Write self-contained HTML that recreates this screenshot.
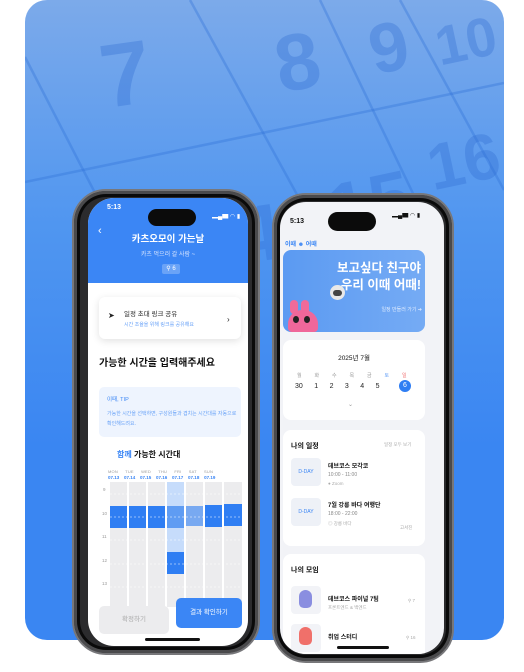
<!DOCTYPE html>
<html><head><meta charset="utf-8">
<style>
*{margin:0;padding:0;box-sizing:border-box}
body{width:524px;height:672px;background:#fff;position:relative;overflow:hidden;font-family:"Liberation Sans","Noto Sans CJK KR",sans-serif}
.abs{position:absolute}
.card{left:25px;top:0;width:479px;height:640px;border-radius:22px;background:linear-gradient(180deg,#7caaea 0%,#5096f0 35%,#3a86f2 70%,#3a86f2 100%);overflow:hidden}
.phone{position:absolute;background:#2b2b2d;border:2px solid #77777a;box-shadow:inset 0 0 0 3px #4a4a4c,inset 0 0 0 6px #0a0a0a}
.screen{position:absolute;overflow:hidden}
.t{position:absolute;white-space:nowrap}
.isl{position:absolute;background:#0b0b0b;border-radius:10px}
</style></head><body>
<div class="abs card">
<svg width="479" height="640" style="position:absolute;left:0;top:0">
<g stroke="#2f6fd6" stroke-opacity=".35" stroke-width="2.5" fill="none">
<line x1="0" y1="182" x2="479" y2="83"/>
<line x1="0" y1="57" x2="120" y2="290"/>
<line x1="165" y1="0" x2="330" y2="300"/>
<line x1="295" y1="0" x2="420" y2="260"/>
<line x1="375" y1="0" x2="479" y2="190"/>
</g>
<g fill="#2d6ad0" fill-opacity=".33" font-family="Liberation Sans" font-weight="bold">
<text x="75" y="105" font-size="90" transform="rotate(-8 100 70)">7</text>
<text x="250" y="88" font-size="80" transform="rotate(-10 280 60)">8</text>
<text x="345" y="70" font-size="70" transform="rotate(-12 370 50)">9</text>
<text x="410" y="62" font-size="55" transform="rotate(-12 430 40)">10</text>
<text x="300" y="230" font-size="75" transform="rotate(-12 340 190)">15</text>
<text x="400" y="185" font-size="65" transform="rotate(-12 430 150)">16</text>
<text x="210" y="260" font-size="80" transform="rotate(-8 240 220)">4</text>
</g>
</svg>
</div>

<!-- LEFT PHONE -->
<div class="phone" style="left:72px;top:189px;width:188px;height:466px;border-radius:34px"></div>
<div class="screen" style="left:88px;top:198px;width:160px;height:448px;border-radius:26px;background:#fff">
  <div class="abs" style="left:0;top:0;width:160px;height:85px;background:#3b86f5"></div>
  <div class="t" style="left:19px;top:6px;font-size:7px;color:#fff;font-weight:bold">5:13</div>
  <div class="isl" style="left:60px;top:11px;width:48px;height:17px"></div>
  <div class="t" style="left:124px;top:13px;font-size:6px;color:#fff">▂▄▆ ◠ ▮</div>
  <div class="t" style="left:10px;top:27px;font-size:11px;color:#fff">‹</div>
  <div class="t" style="left:0;width:160px;text-align:center;top:33px;font-size:9.5px;color:#fff;font-weight:bold">카츠오모이 가는날</div>
  <div class="t" style="left:0;width:160px;text-align:center;top:51px;font-size:6px;color:#dbe7ff">카츠 먹으러 갈 사람 ~</div>
  <div class="abs" style="left:74px;top:66px;width:18px;height:10px;background:#6aa3f7;border-radius:2px;color:#fff;font-size:6px;text-align:center;line-height:10px">⚲ 6</div>
  <div class="abs" style="left:11px;top:99px;width:142px;height:42px;background:#fff;border-radius:6px;box-shadow:0 2px 8px rgba(0,0,0,.12)"></div>
  <div class="t" style="left:20px;top:113px;font-size:8px;color:#222">➤</div>
  <div class="t" style="left:36px;top:110px;font-size:6.5px;color:#222">일정 초대 링크 공유</div>
  <div class="t" style="left:36px;top:123px;font-size:5px;color:#6aa3f7">시간 조율을 위해 링크를 공유해요</div>
  <div class="t" style="left:139px;top:117px;font-size:8px;color:#222">›</div>
  <div class="t" style="left:11px;top:156px;font-size:10px;color:#111;font-weight:bold">가능한 시간을 입력해주세요</div>
  <div class="abs" style="left:11px;top:189px;width:142px;height:50px;background:#eef4fe;border-radius:5px"></div>
  <div class="t" style="left:19px;top:197px;font-size:5.5px;color:#3b86f5">이때, TIP</div>
  <div class="t" style="left:19px;top:211px;font-size:5px;color:#6aa3f7;line-height:10px">가능한 시간을 선택하면, 구성원들과 겹치는 시간대를 자동으로<br>확인해드려요.</div>
  <div class="t" style="left:29px;top:251px;font-size:8px;color:#111;font-weight:bold"><span style="color:#3b86f5">함께</span> 가능한 시간대</div>
  <div class="t" style="left:20px;top:271px;font-size:4px;color:#999;letter-spacing:.2px;word-spacing:6px">MON TUE WED THU FRI SAT SUN</div>
  <div class="t" style="left:20px;top:277px;font-size:4.5px;color:#3b86f5;font-weight:bold;word-spacing:3.5px">07.13 07.14 07.15 07.16 07.17 07.18 07.19</div>
  <div class="t" style="left:15px;top:289px;font-size:4.5px;color:#999">9</div>
  <div class="t" style="left:14px;top:313px;font-size:4.5px;color:#999">10</div>
  <div class="t" style="left:14px;top:336px;font-size:4.5px;color:#999">11</div>
  <div class="t" style="left:14px;top:360px;font-size:4.5px;color:#999">12</div>
  <div class="t" style="left:14px;top:383px;font-size:4.5px;color:#999">13</div>
  <svg class="abs" style="left:22px;top:284px" width="132" height="125">
    <g fill="#ececee">
      <rect x="0" y="0" width="17" height="125"/><rect x="19" y="0" width="17" height="125"/><rect x="38" y="0" width="17" height="125"/>
      <rect x="57" y="0" width="17" height="125"/><rect x="76" y="0" width="17" height="125"/><rect x="95" y="0" width="17" height="125"/><rect x="114" y="0" width="18" height="125"/>
    </g>
    <rect x="57" y="0" width="17" height="80" fill="#c6dcfb"/>
    <g fill="#2f7ef3">
      <rect x="0" y="24" width="17" height="22"/><rect x="19" y="24" width="17" height="22"/><rect x="38" y="24" width="17" height="22"/>
      <rect x="95" y="23" width="17" height="22"/><rect x="114" y="22" width="18" height="22"/>
      <rect x="57" y="70" width="17" height="22"/>
    </g>
    <rect x="57" y="24" width="17" height="22" fill="#5f9cf3"/>
    <rect x="76" y="24" width="17" height="20" fill="#78a9f1"/>
    <g stroke="#fff" stroke-dasharray="2 2" stroke-width=".6"><line x1="0" y1="12" x2="132" y2="12"/><line x1="0" y1="35" x2="132" y2="35"/><line x1="0" y1="58" x2="132" y2="58"/><line x1="0" y1="82" x2="132" y2="82"/><line x1="0" y1="105" x2="132" y2="105"/></g>
  </svg>
  <div class="abs" style="left:11px;top:408px;width:70px;height:28px;background:#ececee;border-radius:5px;color:#aaa;font-size:6.5px;text-align:center;line-height:28px">확정하기</div>
  <div class="abs" style="left:88px;top:400px;width:66px;height:30px;background:#3b86f5;border-radius:5px;color:#fff;font-size:6.5px;text-align:center;line-height:30px">결과 확인하기</div>
  <div class="abs" style="left:57px;top:440px;width:55px;height:3px;background:#111;border-radius:2px"></div>
</div>

<!-- RIGHT PHONE -->
<div class="phone" style="left:272px;top:193px;width:182px;height:470px;border-radius:34px"></div>
<div class="screen" style="left:280px;top:202px;width:164px;height:452px;border-radius:26px;background:#f2f3f7">
  <div class="t" style="left:10px;top:16px;font-size:7px;color:#111;font-weight:bold">5:13</div>
  <div class="isl" style="left:48px;top:10px;width:48px;height:19px"></div>
  <div class="t" style="left:112px;top:8px;font-size:6px;color:#111">▂▄▆ ◠ ▮</div>
  <div class="t" style="left:5px;top:37px;font-size:6px;color:#3b86f5;font-weight:bold">이때 ☻ 어때</div>
  <div class="abs" style="left:3px;top:48px;width:142px;height:82px;border-radius:8px;background:linear-gradient(90deg,#5b9af2,#75abf4)"></div>
  <div class="t" style="left:40px;top:58px;width:101px;text-align:right;font-size:12.5px;line-height:17px;color:#fff;font-weight:bold">보고싶다 친구야<br>우리 이때 어때!</div>
  <div class="t" style="left:80px;top:104px;width:62px;text-align:right;font-size:5px;color:#e0ecff">일정 만들러 가기 ➔</div>
  <div class="abs" style="left:50px;top:83px;width:15px;height:15px;border-radius:50%;background:#e8e8e8"></div>
  <div class="abs" style="left:53px;top:88px;width:9px;height:6px;border-radius:4px;background:#444"></div>
  <div class="abs" style="left:10px;top:98px;width:8px;height:14px;border-radius:4px;background:#f06a9a"></div>
  <div class="abs" style="left:21px;top:98px;width:8px;height:14px;border-radius:4px;background:#f06a9a"></div>
  <div class="abs" style="left:8px;top:108px;width:30px;height:22px;border-radius:14px 14px 4px 4px;background:#f0679a"></div>
  <div class="abs" style="left:13px;top:114px;width:6px;height:7px;border-radius:50%;background:#222"></div>
  <div class="abs" style="left:24px;top:114px;width:6px;height:7px;border-radius:50%;background:#222"></div>
  <div class="abs" style="left:3px;top:138px;width:142px;height:80px;border-radius:8px;background:#fff"></div>
  <div class="t" style="left:3px;width:142px;text-align:center;top:150px;font-size:6.5px;color:#111">2025년 7월</div>
  <div class="t" style="left:17px;top:170px;font-size:5px;color:#999;word-spacing:11.5px">월 화 수 목 금 <span style="color:#6aa3f7">토</span> <span style="color:#f07070">일</span></div>
  <div class="t" style="left:15px;top:181px;font-size:7px;color:#222;word-spacing:9.5px">30 1 2 3 4 5</div>
  <div class="abs" style="left:119px;top:178px;width:12px;height:12px;border-radius:50%;background:#2f7ef3;color:#fff;font-size:7px;text-align:center;line-height:12px">6</div>
  <div class="t" style="left:68px;top:199px;font-size:6px;color:#999">⌄</div>
  <div class="abs" style="left:3px;top:228px;width:142px;height:116px;border-radius:8px;background:#fff"></div>
  <div class="t" style="left:11px;top:239px;font-size:7px;color:#111;font-weight:bold">나의 일정</div>
  <div class="t" style="left:104px;top:240px;font-size:4.5px;color:#aaa">일정 모두 보기</div>
  <div class="abs" style="left:11px;top:256px;width:30px;height:28px;border-radius:4px;background:#eef1f7;color:#3b86f5;font-size:5px;text-align:center;line-height:28px">D-DAY</div>
  <div class="t" style="left:48px;top:259px;font-size:6px;color:#111;font-weight:bold">데브코스 모각코</div>
  <div class="t" style="left:48px;top:270px;font-size:5px;color:#888">10:00 - 11:00</div>
  <div class="t" style="left:48px;top:279px;font-size:4.5px;color:#aaa">● Zoom</div>
  <div class="abs" style="left:11px;top:296px;width:30px;height:28px;border-radius:4px;background:#eef1f7;color:#3b86f5;font-size:5px;text-align:center;line-height:28px">D-DAY</div>
  <div class="t" style="left:48px;top:298px;font-size:6px;color:#111;font-weight:bold">7월 강릉 바다 여행단</div>
  <div class="t" style="left:48px;top:309px;font-size:5px;color:#888">18:00 - 22:00</div>
  <div class="t" style="left:48px;top:319px;font-size:4.5px;color:#aaa">◎ 강릉 바다</div>
  <div class="t" style="left:120px;top:323px;font-size:4.5px;color:#aaa">고서진</div>
  <div class="abs" style="left:3px;top:352px;width:142px;height:120px;border-radius:8px;background:#fff"></div>
  <div class="t" style="left:11px;top:363px;font-size:7px;color:#111;font-weight:bold">나의 모임</div>
  <div class="abs" style="left:11px;top:384px;width:30px;height:28px;border-radius:4px;background:#f2f3f7"></div>
  <div class="abs" style="left:19px;top:388px;width:13px;height:18px;border-radius:8px 8px 6px 6px;background:#8a8ee0"></div>
  <div class="t" style="left:48px;top:392px;font-size:6px;color:#111;font-weight:bold">데브코스 파이널 7팀</div>
  <div class="t" style="left:48px;top:403px;font-size:4.5px;color:#aaa">프론트엔드 &amp; 백엔드</div>
  <div class="t" style="left:128px;top:396px;font-size:4.5px;color:#aaa">⚲ 7</div>
  <div class="abs" style="left:11px;top:422px;width:30px;height:28px;border-radius:4px;background:#f2f3f7"></div>
  <div class="abs" style="left:19px;top:425px;width:13px;height:18px;border-radius:8px 8px 6px 6px;background:#f0706a"></div>
  <div class="t" style="left:48px;top:430px;font-size:6px;color:#111;font-weight:bold">취업 스터디</div>
  <div class="t" style="left:126px;top:433px;font-size:4.5px;color:#aaa">⚲ 16</div>
  <div class="abs" style="left:57px;top:444px;width:52px;height:3px;background:#111;border-radius:2px"></div>
</div>
</body></html>
